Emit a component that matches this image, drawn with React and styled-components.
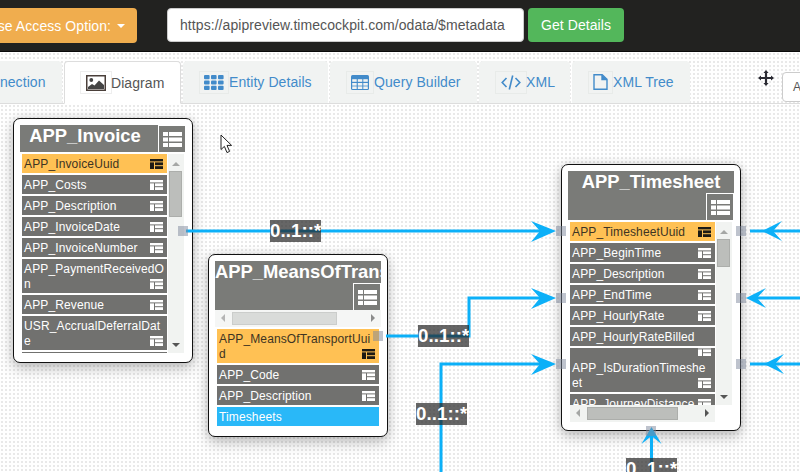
import React from 'react';
import styled, { createGlobalStyle } from 'styled-components';

const Global = createGlobalStyle`
  html, body { margin: 0; padding: 0; background: #fff; }
  body { font-family: "Liberation Sans", Arial, sans-serif; font-size: 14px; color: #555; letter-spacing: .07px; }
  * { box-sizing: border-box; }
`;

const Page = styled.div`
  width: 800px; height: 472px; overflow: hidden; display: flex; flex-direction: column;
`;
const TopBar = styled.header`
  flex: none; height: 52px; background: #222220; border-bottom: 1px solid #0a0a0a;
  display: flex; align-items: flex-start; padding-top: 8px;
`;
const BarButton = styled.button`
  flex: none; height: ${p => p.$h}px; width: ${p => p.$w}px; border: 0; border-radius: 4px; color: #fff;
  font: 14px/20px "Liberation Sans", Arial, sans-serif; letter-spacing: .07px; padding: 0 12px; white-space: nowrap;
  display: flex; align-items: center; justify-content: center; gap: 6px; background: ${p => p.$bg};
`;
const AccessButton = styled(BarButton)`margin-left: -48px; margin-right: 30px;`;
const Caret = styled.span`
  width: 0; height: 0; border-top: 4px solid #fff; border-left: 4px solid transparent; border-right: 4px solid transparent;
`;
const UrlInput = styled.div`
  flex: none; width: 357px; height: 34px; background: #fff; border: 1px solid #ccc; border-radius: 4px;
  padding: 6px 12px; line-height: 20px; color: #555; margin-right: 4px; white-space: nowrap;
`;
const Surface = styled.div`
  flex: 1; min-height: 0; display: flex; flex-direction: column;
  background-color: #fff;
  background-image: radial-gradient(#e9e9e9 0.8px, transparent 1px);
  background-size: 4px 4px;
`;
const TabRow = styled.nav`
  flex: none; height: 52px; padding-top: 9px; display: flex; align-items: flex-start;
  border-bottom: 1px solid #ddd; position: relative;
`;
const Tab = styled.div`
  flex: none; width: ${p => p.$w}px; height: ${p => (p.$active ? 43 : 42)}px; display: flex; align-items: center; white-space: nowrap;
  margin-right: 2px; padding: 0 15px; border-radius: 4px 4px 0 0; line-height: 20px;
  color: ${p => (p.$active ? '#555' : '#428bca')};
  background: ${p => (p.$active ? '#fff' : '#f1f3f2')};
  border: 1px solid ${p => (p.$active ? '#ddd' : '#f1f3f2')};
  ${p => p.$active && 'border-bottom-color: #fff;'}
  ${p => p.$first && 'margin-left: -42px;'}
`;
const TabIcon = styled.span`
  flex: none; width: ${p => p.$w}px; height: 23px; display: flex; align-items: center; justify-content: center;
  border: 1px solid ${p => (p.$active ? '#eeeeee' : '#e8ebe9')}; margin-right: ${p => p.$gap ?? 0}px;
`;
const MoveTool = styled.div`
  position: absolute; left: 758px; top: 18px; width: 16px; height: 16px; display: flex; color: #2b2b33;
`;
const ZoomSelect = styled.div`
  position: absolute; left: 782px; top: 20px; width: 90px; height: 30px; background: #fff; border: 1px solid #ccc;
  border-radius: 4px; padding: 4px 10px; line-height: 20px; color: #555; font-size: 12px;
`;
const Canvas = styled.main`
  position: relative; flex: 1; min-height: 0; overflow: hidden;
`;
const Node = styled.section`
  position: absolute; left: ${p => p.$x}px; top: ${p => p.$y}px; width: 180px; height: ${p => p.$h}px;
  background: #fff; border: 1px solid #111; border-radius: 7px; padding: 6px;
  box-shadow: 0 6px 14px rgba(0,0,0,.22), 0 0 8px rgba(0,0,0,.12);
`;
const Head = styled.div`
  background: #7a7b78; display: flex; flex-direction: ${p => (p.$stacked ? 'column' : 'row')};
  align-items: ${p => (p.$stacked ? 'flex-end' : 'flex-start')}; height: ${p => (p.$stacked ? 49 : 27)}px;
`;
const Title = styled.h3`
  margin: 0; flex: ${p => (p.$stacked ? 'none' : '1')}; min-width: 0; width: ${p => (p.$stacked ? '100%' : 'auto')}; height: 22px; line-height: 22px; font-size: 18.4px; font-weight: 700; color: #fff; letter-spacing: 0;
  text-align: center; white-space: nowrap; overflow: hidden; ${p => !p.$stacked && 'padding-right: 8px;'}
`;
const HeadButton = styled.div`
  flex: none; width: 28px; height: 27px; border: 1px solid #fff; display: flex; align-items: center; justify-content: center;
  border-bottom: 0; color: #fff;
`;
const HScroll = styled.div`
  height: 17px; background: ${p => (p.$dim ? '#f5f6f5' : '#f1f3f1')}; display: flex; align-items: center; position: relative;
`;
const Body = styled.div`
  display: grid; grid-template-columns: ${p => (p.$wide ? '162px' : '145px 17px')}; grid-template-rows: ${p => p.$h}px auto;
  margin: 2px 0 0 2px;
`;
const Rows = styled.div`
  overflow: hidden; display: flex; flex-direction: column; gap: 2px;
`;
const Row = styled.div`
  flex: none; padding: 3px 2px 1px; font-size: 12px; line-height: 15px; letter-spacing: .13px; color: ${p => (p.$kind === 'key' ? '#3d3423' : '#fff')};
  background: ${p => ({ key: '#ffc154', nav: '#29b8f8' }[p.$kind] || '#71716f')};
`;
const RowIconWrap = styled.span`
  float: right; width: 13px; height: 14px; margin-right: 2px; display: flex; align-items: center; color: ${p => (p.$kind === 'key' ? '#1c1a14' : '#fff')};
`;
const Spill = styled.div`
  height: 15px; margin-top: -5px; padding-right: 2px; display: flex; justify-content: flex-end; align-items: flex-start; color: #fff;
`;
const VScroll = styled.div`
  background: #f1f3f1; position: relative; margin-left: 1px; margin-right: 0;
`;
const VThumb = styled.div`
  position: absolute; left: 1px; width: 13px; top: ${p => p.$top}px; height: ${p => p.$h}px; background: #bcbebb; border: 1px solid #acaeab;
`;
const HThumb = styled.div`
  position: absolute; top: 2px; height: 13px; left: ${p => p.$left}px; width: ${p => p.$w}px;
  background: ${p => (p.$dim ? '#d9dbd9' : '#bcbebb')}; border: 1px solid ${p => (p.$dim ? '#cbcdcb' : '#acaeab')};
`;
const ArrowTip = styled.span`
  position: absolute; width: 0; height: 0;
  ${p => p.$dir === 'up' && `left: 4px; top: 8px; border-left: 4px solid transparent; border-right: 4px solid transparent; border-bottom: 4px solid #a5a7a5;`}
  ${p => p.$dir === 'down' && `left: 4px; bottom: 6px; border-left: 4px solid transparent; border-right: 4px solid transparent; border-top: 4px solid #555;`}
  ${p => p.$dir === 'left' && `left: 6px; top: 4px; border-top: 4px solid transparent; border-bottom: 4px solid transparent; border-right: 4px solid ${p.$dim ? '#b5b5b5' : '#a5a7a5'};`}
  ${p => p.$dir === 'right' && `right: 6px; top: 4px; border-top: 4px solid transparent; border-bottom: 4px solid transparent; border-left: 4px solid ${p.$dim ? '#8c8c8c' : '#555'};`}
`;
const EdgeLayer = styled.svg`
  position: absolute; left: 0; top: 0; width: 800px; height: 368px; pointer-events: none;
`;
const Port = styled.div`
  position: absolute; left: ${p => p.$x}px; top: ${p => p.$y - 104}px; width: 10px; height: 10px; background: rgba(125,135,155,.5);
`;
const CardLabel = styled.div`
  position: absolute; left: ${p => p.$x}px; top: ${p => p.$y - 104}px; width: 51px; height: 22px; background: rgba(37,37,37,.7);
  color: #fff; font-weight: 700; font-size: 18.67px; line-height: 22px; white-space: nowrap; overflow: hidden;
`;
const Pointer = styled.svg`
  position: absolute; left: 220px; top: 30px; width: 14px; height: 20px;
`;

const RowGlyph = () => (
  <svg width="13" height="10" viewBox="0 0 13 10" fill="currentColor" aria-hidden="true">
    <rect x="0" y="0" width="13" height="2.4" />
    <rect x="0" y="3.4" width="4" height="6.6" />
    <rect x="5" y="3.4" width="8" height="2.8" />
    <rect x="5" y="7.2" width="8" height="2.8" />
  </svg>
);
const ListGlyph = () => (
  <svg width="19" height="15" viewBox="0 0 19 15" fill="currentColor" aria-hidden="true">
    <rect x="0" y="0" width="5" height="4" /><rect x="6" y="0" width="13" height="4" />
    <rect x="0" y="5.5" width="5" height="4" /><rect x="6" y="5.5" width="13" height="4" />
    <rect x="0" y="11" width="5" height="4" /><rect x="6" y="11" width="13" height="4" />
  </svg>
);
const PictureIcon = () => (
  <svg width="20" height="16" viewBox="0 0 20 16" aria-hidden="true">
    <rect x="0.75" y="0.75" width="18.5" height="14.5" fill="#fff" stroke="#4a3f3a" strokeWidth="1.5" />
    <circle cx="5.3" cy="5" r="1.9" fill="#444" />
    <path d="M2 14 L2 12 L6 9 L8.5 10.5 L13 5.5 L18 10 L18 14 Z" fill="#444" />
  </svg>
);
const GridIcon = () => (
  <svg width="20" height="15" viewBox="0 0 20 15" fill="#428bca" aria-hidden="true">
    {[0, 5.4, 10.8].map(y => [0, 7, 14].map(x => <rect key={`${x}-${y}`} x={x} y={y} width="5.6" height="4.2" rx="1" />))}
  </svg>
);
const TableIcon = () => (
  <svg width="18" height="15" viewBox="0 0 18 15" aria-hidden="true">
    <rect x="0" y="0" width="18" height="15" rx="1.5" fill="#428bca" />
    {[4.2, 8, 11.4].map(y => [1.2, 6.8, 12.3].map(x => <rect key={`${x}-${y}`} x={x} y={y} width="4.5" height="2.6" fill="#f1f3f2" />))}
  </svg>
);
const CodeIcon = () => (
  <svg width="20" height="15" viewBox="0 0 20 15" fill="none" stroke="#428bca" strokeWidth="1.6" aria-hidden="true">
    <path d="M5.5 3 L1.2 7.5 L5.5 12" /><path d="M14.5 3 L18.8 7.5 L14.5 12" /><path d="M11.7 0.5 L8.3 14.5" />
  </svg>
);
const FileIcon = () => (
  <svg width="15" height="16" viewBox="0 0 15 16" fill="none" stroke="#428bca" strokeWidth="1.4" aria-hidden="true">
    <path d="M1 0.8 H9.2 L14 5.4 V15.2 H1 Z" /><path d="M9 1 V5.6 H14" fill="#428bca" />
  </svg>
);
const MoveIcon = () => (
  <svg width="16" height="16" viewBox="0 0 16 16" fill="currentColor" aria-hidden="true">
    <path d="M8 0 L10.6 3 H9.1 V6.9 H13 V5.4 L16 8 L13 10.6 V9.1 H9.1 V13 H10.6 L8 16 L5.4 13 H6.9 V9.1 H3 V10.6 L0 8 L3 5.4 V6.9 H6.9 V3 H5.4 Z" />
  </svg>
);

const Head_ = ({ title, stacked }) => (
  <Head $stacked={stacked}>
    <Title $stacked={stacked}>{title}</Title>
    <HeadButton><ListGlyph /></HeadButton>
  </Head>
);
const FieldRow = ({ name, kind, plain, spill }) => (
  <Row $kind={kind}>
    {spill && <Spill><RowGlyph /></Spill>}
    {name}
    {!plain && kind !== 'nav' && <RowIconWrap $kind={kind}><RowGlyph /></RowIconWrap>}
  </Row>
);

const invoice = [
  { name: 'APP_InvoiceUuid', kind: 'key' }, { name: 'APP_Costs' }, { name: 'APP_Description' }, { name: 'APP_InvoiceDate' },
  { name: 'APP_InvoiceNumber' }, { name: 'APP_PaymentReceivedO\u200bn' }, { name: 'APP_Revenue' }, { name: 'USR_AccrualDeferralDat\u200be' }, { name: 'USR_Other' },
];
const means = [
  { name: 'APP_MeansOfTransportUui\u200bd', kind: 'key' }, { name: 'APP_Code' }, { name: 'APP_Description' }, { name: 'Timesheets', kind: 'nav' },
];
const timesheet = [
  { name: 'APP_TimesheetUuid', kind: 'key' }, { name: 'APP_BeginTime' }, { name: 'APP_Description' }, { name: 'APP_EndTime' },
  { name: 'APP_HourlyRate' }, { name: 'APP_HourlyRateBilled', plain: true }, { name: 'APP_IsDurationTimeshe\u200bet', spill: true }, { name: 'APP_JourneyDistance' },
];
const edges = [
  'M186 231 H548', 'M386 336 H469 V298 H548', 'M441 472 V364 H548',
  'M800 231 H750', 'M800 298 H750', 'M800 364 H750', 'M651.5 472 V432',
];
const Arrowhead = ({ x, y, dir }) => {
  const pts = { r: [[-25, -10], [-16, 0], [-25, 11], [0, 0]], l: [[20, -10], [11, 0], [20, 10], [0, 0]], u: [[-10, 17], [0, 9], [10, 17], [0, 0]] }[dir];
  const [a, b, c, d] = pts;
  return <path fill="#0cb0f8" d={`M${x + d[0]} ${y + d[1]} L${x + a[0]} ${y + a[1]} L${x + b[0]} ${y + b[1]} L${x + c[0]} ${y + c[1]} Z`} />;
};

export default function App() {
  return (
    <Page>
      <Global />
      <TopBar>
        <AccessButton $w={185} $h={35} $bg="#f0ad4e">Choose Access Option: <Caret /></AccessButton>
        <UrlInput>https://apipreview.timecockpit.com/odata/$metadata</UrlInput>
        <BarButton $w={96} $h={34} $bg="#53b75b">Get Details</BarButton>
      </TopBar>
      <Surface>
        <TabRow>
          <Tab $first $w={104}>Connection</Tab>
          <Tab $active $w={117}><TabIcon $w={32} $active $gap={-1}><PictureIcon /></TabIcon>Diagram</Tab>
          <Tab $w={145}><TabIcon $w={30}><GridIcon /></TabIcon>Entity Details</Tab>
          <Tab $w={147}><TabIcon $w={28}><TableIcon /></TabIcon>Query Builder</Tab>
          <Tab $w={91}><TabIcon $w={32} $gap={-1}><CodeIcon /></TabIcon>XML</Tab>
          <Tab $w={118}><TabIcon $w={25}><FileIcon /></TabIcon>XML Tree</Tab>
          <MoveTool><MoveIcon /></MoveTool>
          <ZoomSelect>APP</ZoomSelect>
        </TabRow>
        <Canvas>
          <Node $x={13} $y={14} $h={245}>
            <Head_ title="APP_Invoice" />
            <Body $h={199}>
              <Rows>{invoice.map(r => <FieldRow key={r.name} {...r} />)}</Rows>
              <VScroll><ArrowTip $dir="up" /><VThumb $top={17} $h={46} /><ArrowTip $dir="down" /></VScroll>
            </Body>
          </Node>
          <Node $x={208} $y={150} $h={183}>
            <Head_ title="APP_MeansOfTransportation" stacked />
            <HScroll $dim><ArrowTip $dir="left" $dim /><HThumb $dim $left={17} $w={105} /><ArrowTip $dir="right" $dim /></HScroll>
            <Body $wide $h={97}>
              <Rows>{means.map(r => <FieldRow key={r.name + (r.kind || '')} {...r} />)}</Rows>
            </Body>
          </Node>
          <Node $x={561} $y={60} $h={267}>
            <Head_ title="APP_Timesheet" stacked />
            <Body $h={183}>
              <Rows>{timesheet.map(r => <FieldRow key={r.name} {...r} />)}</Rows>
              <VScroll><ArrowTip $dir="up" /><VThumb $top={17} $h={28} /><ArrowTip $dir="down" /></VScroll>
              <HScroll><ArrowTip $dir="left" /><HThumb $left={17} $w={91} /><ArrowTip $dir="right" /></HScroll>
            </Body>
          </Node>
          <EdgeLayer viewBox="0 104 800 368">
            <g fill="none" stroke="#0cb0f8" strokeWidth="3">
              {edges.map(d => <path key={d} d={d} />)}
            </g>
            <Arrowhead x={556} y={231} dir="r" />
            <Arrowhead x={556} y={298} dir="r" />
            <Arrowhead x={556} y={364} dir="r" />
            <Arrowhead x={762} y={231} dir="l" />
            <Arrowhead x={746} y={298} dir="l" />
            <Arrowhead x={764} y={364} dir="l" />
            <Arrowhead x={651.5} y={427} dir="u" />
          </EdgeLayer>
          <Port $x={178} $y={226} />
          <Port $x={373} $y={331} />
          <Port $x={556} $y={226} />
          <Port $x={556} $y={293} />
          <Port $x={556} $y={359} />
          <Port $x={736} $y={226} />
          <Port $x={736} $y={293} />
          <Port $x={736} $y={359} />
          <Port $x={646} $y={426} />
          <CardLabel $x={270} $y={220}>0..1::*</CardLabel>
          <CardLabel $x={418} $y={325}>0..1::*</CardLabel>
          <CardLabel $x={416} $y={403}>0..1::*</CardLabel>
          <CardLabel $x={626} $y={458}>0..1::*</CardLabel>
          <Pointer viewBox="0 0 14 20" aria-hidden="true">
            <path d="M1 1 V15.5 L4.4 12.4 L7 18.6 L9.6 17.4 L7 11.4 H11.6 Z" fill="#fff" stroke="#222" strokeWidth="1" />
          </Pointer>
        </Canvas>
      </Surface>
    </Page>
  );
}
